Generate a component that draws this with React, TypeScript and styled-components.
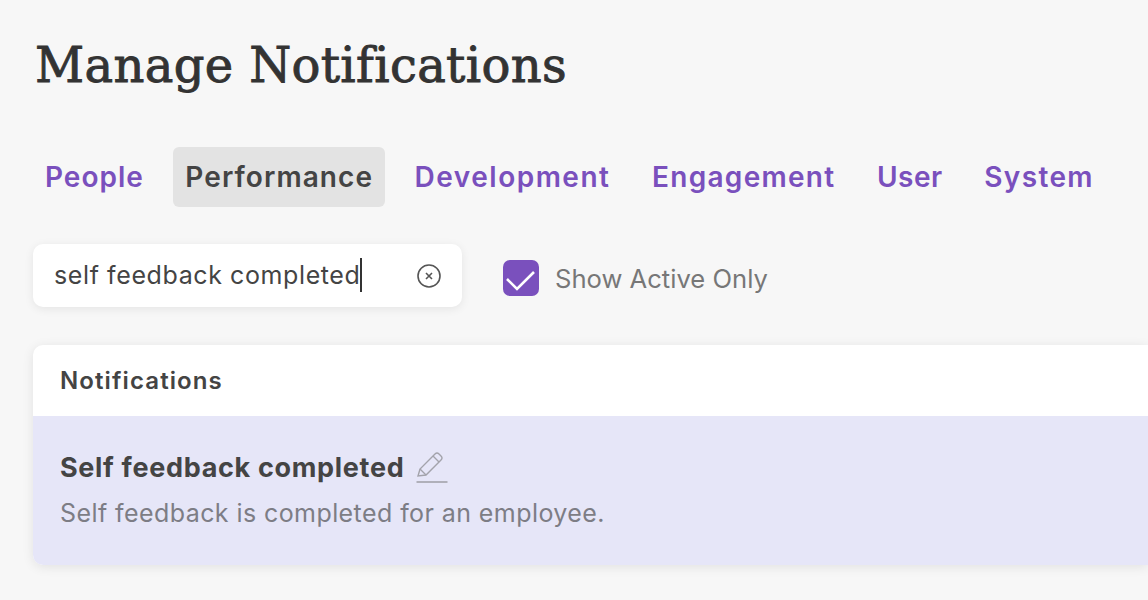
import React from "react";
import styled, { createGlobalStyle } from "styled-components";

const Global = createGlobalStyle`
  html, body { margin: 0; padding: 0; background: #f7f7f7; }
  body { font-family: "Inter", "Liberation Sans", sans-serif; }
`;

const Page = styled.div`
  width: 1148px;
  height: 600px;
  overflow: hidden;
  padding: 33px 0 0 33px;
  box-sizing: border-box;
  background: #f7f7f7;
`;

const Title = styled.h1`
  margin: 0 0 0 2px;
  font-family: "DejaVu Serif", serif;
  font-weight: 400;
  font-size: 48px;
  letter-spacing: 0.35px;
  line-height: 64px;
  color: #333;
  -webkit-text-stroke: 0.9px #333;
`;

const Tabs = styled.nav`
  display: flex;
  margin-top: 50px;
  gap: 18px;
`;

const Tab = styled.div<{ $active?: boolean; $track?: number }>`
  padding: 0 11.5px 0 12px;
  height: 60px;
  display: flex;
  align-items: center;
  border-radius: 6px;
  font-size: 28px;
  font-weight: 600;
  letter-spacing: ${(p) => p.$track ?? 1}px;
  color: ${(p) => (p.$active ? "#444" : "#7a50bd")};
  background: ${(p) => (p.$active ? "#e3e3e3" : "transparent")};
`;

const Controls = styled.div`
  display: flex;
  align-items: center;
  margin-top: 37px;
  gap: 41px;
`;

const Search = styled.div`
  width: 429px;
  height: 63px;
  box-sizing: border-box;
  background: #fff;
  border-radius: 10px;
  padding: 0 20px 0 21px;
  display: flex;
  align-items: center;
  justify-content: space-between;
  font-size: 25px;
  letter-spacing: 0.6px;
  color: #444;
  box-shadow: 0 2px 10px rgba(0, 0, 0, 0.08);
`;

const Query = styled.span`
  display: flex;
  align-items: center;
  line-height: 34px;
  margin-top: -2px;
`;

const Caret = styled.span`
  width: 2px;
  height: 34px;
  background: #333;
`;

const Check = styled.label`
  display: flex;
  align-items: center;
  gap: 16px;
  margin-top: 5px;
  font-size: 25.6px;
  color: #777;
`;

const Box = styled.span`
  width: 36px;
  height: 36px;
  border-radius: 7px;
  background: #7a50bd;
  display: flex;
  align-items: center;
  justify-content: center;
`;

const Card = styled.section`
  margin-top: 38px;
  background: #fff;
  border-radius: 10px 0 0 10px;
  box-shadow: 0 2px 12px rgba(0, 0, 0, 0.09);
`;

const CardHead = styled.div`
  height: 71px;
  padding-left: 27px;
  display: flex;
  align-items: center;
  font-size: 24px;
  font-weight: 600;
  letter-spacing: 1.1px;
  color: #444;
`;

const Row = styled.div`
  height: 149px;
  background: #e6e6f8;
  padding: 34px 0 0 27px;
  box-sizing: border-box;
  border-radius: 0 0 0 10px;
`;

const RowTitle = styled.div`
  display: flex;
  align-items: center;
  gap: 12px;
  font-size: 27px;
  font-weight: 700;
  letter-spacing: 0.68px;
  color: #444;
`;

const RowDesc = styled.div`
  margin-top: 14px;
  font-size: 25px;
  letter-spacing: 0.42px;
  color: #7d7d85;
`;

export default function App() {
  return (
    <Page>
      <Global />
      <Title>Manage Notifications</Title>
      <Tabs>
        <Tab>People</Tab>
        <Tab $active $track={1.07}>Performance</Tab>
        <Tab $track={1.5}>Development</Tab>
        <Tab $track={1.3}>Engagement</Tab>
        <Tab $track={0.5}>User</Tab>
        <Tab $track={1.4}>System</Tab>
      </Tabs>
      <Controls>
        <Search>
          <Query>self feedback completed<Caret /></Query>
          <svg width="26" height="26" viewBox="0 0 26 26" fill="none" stroke="#555" strokeWidth="1.6">
            <circle cx="13" cy="13" r="11" />
            <path d="M10 10l6 6M16 10l-6 6" />
          </svg>
        </Search>
        <Check>
          <Box>
            <svg width="36" height="36" viewBox="0 0 36 36" fill="none" stroke="#fff" strokeWidth="2.6">
              <path d="M4 19l10 10L31 12" />
            </svg>
          </Box>
          Show Active Only
        </Check>
      </Controls>
      <Card>
        <CardHead>Notifications</CardHead>
        <Row>
          <RowTitle>
            Self feedback completed
            <svg width="32" height="34" viewBox="0 0 32 34" fill="none" stroke="#a3a3ab" strokeWidth="1.4">
              <path d="M2 26l2-7L19 4q2-2 4 0l2 2q2 2 0 4L10 25z" />
              <path d="M17 6l6 6M4 19l6 6" />
              <path d="M0.5 32h31" strokeWidth="1.6" />
            </svg>
          </RowTitle>
          <RowDesc>Self feedback is completed for an employee.</RowDesc>
        </Row>
      </Card>
    </Page>
  );
}
